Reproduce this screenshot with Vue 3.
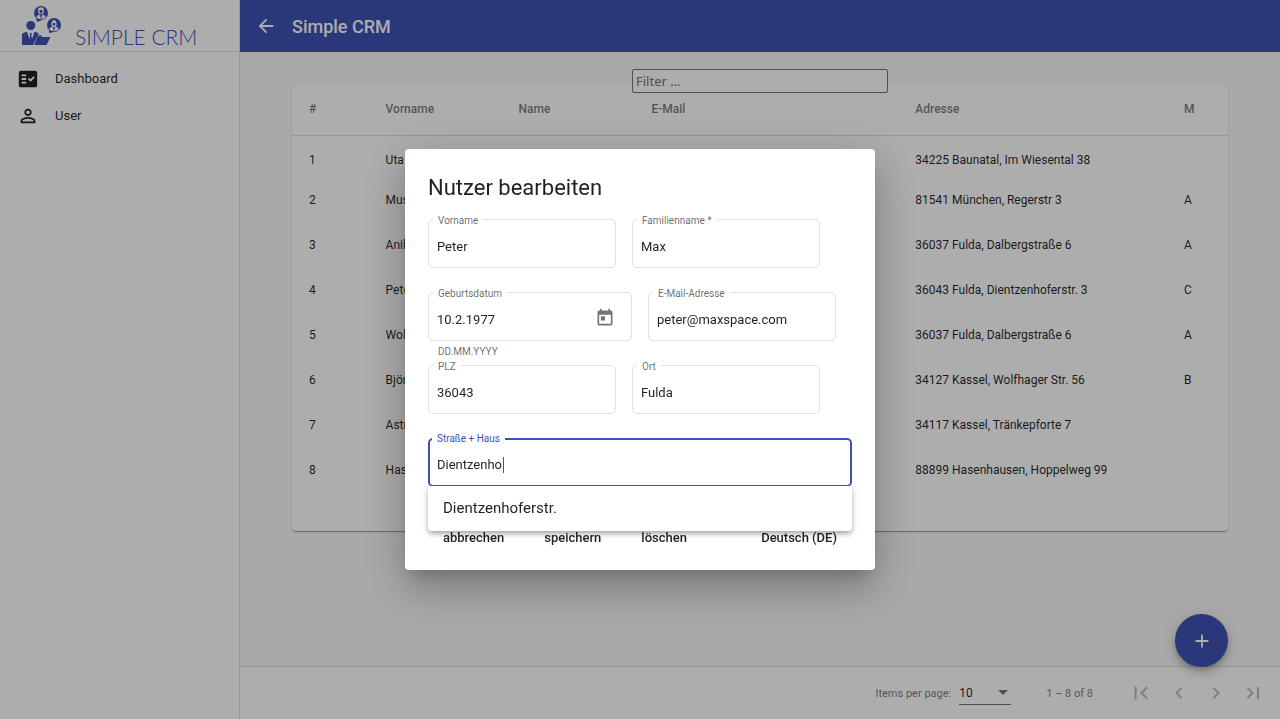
<script setup>
import { ref } from 'vue'

const filter = ref('')
const pageSize = ref('10')

const nav = [
  { label: 'Dashboard', icon: 'M20 3H4c-1.1 0-2 .9-2 2v14c0 1.1.9 2 2 2h16c1.1 0 2-.9 2-2V5c0-1.1-.9-2-2-2zM10 17H5v-2h5v2zm0-4H5v-2h5v2zm0-4H5V7h5v2zm4.82 6L12 12.16l1.41-1.41 1.41 1.42L17.99 9l1.42 1.42L14.82 15z' },
  { label: 'User', icon: 'M12 5.9c1.16 0 2.1.94 2.1 2.1s-.94 2.1-2.1 2.1S9.900 9.160 9.900 8s.94-2.100 2.100-2.100m0 9c2.970 0 6.100 1.460 6.100 2.100v1.100H5.900V17c0-.64 3.130-2.100 6.100-2.100M12 4C9.790 4 8 5.790 8 8s1.790 4 4 4 4-1.790 4-4-1.790-4-4-4zm0 9c-2.670 0-8 1.340-8 4v3h16v-3c0-2.660-5.330-4-8-4z' },
]

const users = [
  { id: 1, first: 'Uta', address: '34225 Baunatal, Im Wiesental 38', m: '' },
  { id: 2, first: 'Muster', address: '81541 München, Regerstr 3', m: 'A' },
  { id: 3, first: 'Anika', address: '36037 Fulda, Dalbergstraße 6', m: 'A' },
  { id: 4, first: 'Peter', address: '36043 Fulda, Dientzenhoferstr. 3', m: 'C' },
  { id: 5, first: 'Wolfgang', address: '36037 Fulda, Dalbergstraße 6', m: 'A' },
  { id: 6, first: 'Björn', address: '34127 Kassel, Wolfhager Str. 56', m: 'B' },
  { id: 7, first: 'Astrid', address: '34117 Kassel, Tränkepforte 7', m: '' },
  { id: 8, first: 'Hase', address: '88899 Hasenhausen, Hoppelweg 99', m: '' },
]

const pager = [
  { label: 'First page', icon: 'M18.41 16.59L13.82 12l4.590-4.590L17 6l-6 6 6 6zM6 6h2v12H6z' },
  { label: 'Previous page', icon: 'M15.41 7.410L14 6l-6 6 6 6 1.410-1.410L10.830 12z' },
  { label: 'Next page', icon: 'M10 6L8.590 7.410 13.170 12l-4.580 4.590L10 18l6-6z' },
  { label: 'Last page', icon: 'M5.590 7.410L10.180 12l-4.590 4.590L7 18l6-6-6-6zM16 6h2v12h-2z' },
]

const form = ref({
  vorname: 'Peter',
  name: 'Max',
  geburt: '10.2.1977',
  mail: 'peter@maxspace.com',
  plz: '36043',
  ort: 'Fulda',
  strasse: 'Dientzenho',
})

const rows = [
  [{ key: 'vorname', label: 'Vorname' }, { key: 'name', label: 'Familienname *' }],
  [{ key: 'geburt', label: 'Geburtsdatum', date: true, hint: 'DD.MM.YYYY' }, { key: 'mail', label: 'E-Mail-Adresse' }],
  [{ key: 'plz', label: 'PLZ' }, { key: 'ort', label: 'Ort' }],
  [{ key: 'strasse', label: 'Straße + Haus', active: true, option: 'Dientzenhoferstr.' }],
]
</script>

<template>
  <div class="app">
    <aside class="side">
      <div class="brand">
        <svg class="logo" viewBox="0 0 40 40" aria-hidden="true">
          <circle cx="19" cy="8" r="7" />
          <path d="M14 12l1 5 5-2z" />
          <circle cx="32" cy="20" r="7" />
          <path d="M27 24v4l5-1z" />
          <g class="cut">
            <path d="M16.200 4.500c0-3 5.600-3 5.600 0v2.500c0 3-5.600 3-5.600 0z" />
            <path d="M14.200 12.500c.5-2 2-2.500 3-3l1.800 2 1.800-2c1 .5 2.500 1 3 3-3 2.200-6.600 2.200-9.600 0z" />
            <path d="M29.300 19.500c0-6 5.400-6 5.400 0l-1 2.500h-3.400z" />
            <path d="M27.200 24.500c.5-2 2-2.500 3-3l1.800 2 1.800-2c1 .5 2.500 1 3 3-3 2.200-6.600 2.200-9.600 0z" />
          </g>
          <path d="M17.600 5h2.800v2c0 1.800-2.800 1.800-2.800 0zM18.400 10h1.200v3.500h-1.200zM30.800 18h2.400v2.500h-2.400zM31.400 22h1.200v3.500h-1.200z" />
          <circle cx="8.800" cy="20.500" r="4.500" />
          <path d="M0 40V30c0-2 3-2.800 5-3.200l2.600 7.200L8.200 30 7.700 28h2.200l-.5 2 .6 4 2.600-7.200c1.500.3 3.200.8 4.200 2.200L11 40z" />
          <path d="M15.500 32l1-1.500h3l.5 1.500h8.500l-4 8H12z" />
        </svg>
        <span class="wordmark">SIMPLE CRM</span>
      </div>
      <nav class="nav">
        <a v-for="n in nav" :key="n.label" href="#">
          <svg viewBox="0 0 24 24" aria-hidden="true"><path :d="n.icon" /></svg>
          <span>{{ n.label }}</span>
        </a>
      </nav>
    </aside>

    <div class="page">
      <header class="bar">
        <button type="button" aria-label="Zurück">
          <svg viewBox="0 0 24 24"><path d="M20 11H7.830l5.590-5.590L12 4l-8 8 8 8 1.410-1.410L7.830 13H20v-2z" /></svg>
        </button>
        <h1>Simple CRM</h1>
      </header>

      <main class="content">
        <input v-model="filter" class="filter" type="text" placeholder="Filter ..." aria-label="Filter">
        <div class="card">
          <table>
            <colgroup>
              <col class="c-id"><col class="c-name"><col class="c-name"><col class="c-mail"><col class="c-adr"><col>
            </colgroup>
            <thead>
              <tr><th>#</th><th>Vorname</th><th>Name</th><th>E-Mail</th><th>Adresse</th><th>M</th></tr>
            </thead>
            <tbody>
              <tr v-for="u in users" :key="u.id">
                <td>{{ u.id }}</td><td>{{ u.first }}</td><td></td><td></td><td>{{ u.address }}</td><td>{{ u.m }}</td>
              </tr>
            </tbody>
          </table>
        </div>
        <button class="fab" type="button" aria-label="Hinzufügen">
          <svg viewBox="0 0 24 24"><path d="M19 13h-6v6h-2v-6H5v-2h6V5h2v6h6v2z" /></svg>
        </button>
      </main>

      <footer class="pager">
        <label for="size">Items per page:</label>
        <div class="size">
          <select id="size" v-model="pageSize">
            <option>10</option>
            <option>25</option>
          </select>
          <i class="caret"></i>
        </div>
        <span class="range">1 – 8 of 8</span>
        <button v-for="p in pager" :key="p.label" type="button" :aria-label="p.label" disabled>
          <svg viewBox="0 0 24 24"><path :d="p.icon" /></svg>
        </button>
      </footer>
    </div>

    <div class="backdrop">
      <form class="dialog" role="dialog" aria-labelledby="dlg-title" @submit.prevent>
        <h2 id="dlg-title">Nutzer bearbeiten</h2>
        <div v-for="(r, i) in rows" :key="i" class="row">
          <div v-for="f in r" :key="f.key" class="field" :class="{ date: f.date, active: f.active }">
            <label :for="f.key">{{ f.label }}</label>
            <input :id="f.key" v-model="form[f.key]" type="text">
            <button v-if="f.date" class="cal" type="button" aria-label="Kalender öffnen">
              <svg viewBox="0 0 24 24"><path d="M19 3h-1V1h-2v2H8V1H6v2H5c-1.110 0-1.990.9-1.990 2L3 19c0 1.100.89 2 2 2h14c1.100 0 2-.9 2-2V5c0-1.100-.9-2-2-2zm0 16H5V8h14v11zM7 10h5v5H7z" /></svg>
            </button>
            <span v-if="f.hint" class="hint">{{ f.hint }}</span>
            <i v-if="f.active" class="cursor"></i>
            <div v-if="f.option" class="menu" role="listbox">
              <div class="option" role="option">{{ f.option }}</div>
            </div>
          </div>
        </div>
        <div class="actions">
          <button type="button">abbrechen</button>
          <button type="submit">speichern</button>
          <button type="button">löschen</button>
          <button type="button" class="lang">Deutsch (DE)</button>
        </div>
      </form>
    </div>
  </div>
</template>

<style>
body {
  background: #fafafa;
}
</style>

<style scoped>
.app, .app * {
  box-sizing: border-box;
}
.app {
  display: flex;
  min-height: 100vh;
  font-family: Roboto, "Liberation Sans", sans-serif;
  font-size: 13px;
  color: rgba(0, 0, 0, .87);
}
button {
  padding: 0;
  border: 0;
  background: none;
  font: inherit;
  color: inherit;
}
svg {
  display: block;
  width: 22px;
  height: 22px;
  fill: currentColor;
}
.side {
  flex: 0 0 240px;
  background: #fff;
  border-right: 1px solid #e0e0e0;
}
.brand {
  display: flex;
  align-items: flex-end;
  gap: 13px;
  height: 52px;
  padding: 0 22px 6px;
  border-bottom: 1px solid #e0e0e0;
  color: #3f51b5;
}
.logo {
  width: 40px;
  height: 40px;
}
.cut {
  fill: #fff;
}
.wordmark {
  font-family: Lato, "Open Sans", sans-serif;
  font-weight: 300;
  font-size: 21px;
  line-height: 16px;
  white-space: nowrap;
}
.nav {
  padding-top: 8px;
}
.nav a {
  display: flex;
  align-items: center;
  gap: 16px;
  height: 37px;
  padding-left: 17px;
  color: inherit;
  text-decoration: none;
}
.page {
  flex: 1;
  display: flex;
  flex-direction: column;
  min-width: 0;
}
.bar {
  display: flex;
  align-items: center;
  gap: 15px;
  height: 52px;
  padding-left: 15px;
  background: #3f51b5;
  color: #fff;
}
h1 {
  margin: 0;
  font-size: 18px;
  font-weight: 500;
}
.content {
  flex: 1;
  display: flex;
  flex-direction: column;
  align-items: center;
  padding: 17px 52px 0;
}
.filter {
  position: relative;
  z-index: 1;
  width: 256px;
  height: 24px;
  padding: 0 3px;
  border: 1px solid #767676;
  border-radius: 2px;
  background: #fff;
  font: 13px "Noto Sans", sans-serif;
}
.card {
  width: 100%;
  margin-top: -10px;
  padding-bottom: 39px;
  background: #fff;
  border-radius: 4px;
  box-shadow: 0 2px 1px -1px rgba(0, 0, 0, .2), 0 1px 1px rgba(0, 0, 0, .14), 0 1px 3px rgba(0, 0, 0, .12);
}
table {
  width: 100%;
  table-layout: fixed;
  border-collapse: collapse;
  font-size: 12px;
}
.c-id { width: 10%; }
.c-name { width: 14.2%; }
.c-mail { width: 28.2%; }
.c-adr { width: 28.7%; }
th, td {
  padding: 0;
  text-align: left;
  white-space: nowrap;
}
th:first-child, td:first-child {
  padding-left: 17px;
}
th {
  height: 52px;
  font-weight: 500;
  color: rgba(0, 0, 0, .54);
  border-bottom: 1px solid #e0e0e0;
}
td {
  height: 45px;
}
tbody tr:first-child td {
  height: 42px;
  padding-top: 8px;
}
.fab {
  display: grid;
  place-items: center;
  align-self: flex-end;
  width: 53px;
  height: 53px;
  margin-top: auto;
  margin-bottom: -1px;
  border-radius: 50%;
  background: #3f51b5;
  color: #fff;
  z-index: 1;
  box-shadow: 0 3px 5px -1px rgba(0, 0, 0, .2), 0 6px 10px rgba(0, 0, 0, .14), 0 1px 18px rgba(0, 0, 0, .12);
}
.pager {
  display: flex;
  align-items: center;
  justify-content: flex-end;
  height: 53px;
  padding-right: 15px;
  background: #fff;
  border-top: 1px solid #e0e0e0;
  font-size: 11px;
  color: rgba(0, 0, 0, .54);
}
.size {
  position: relative;
  width: 52px;
  margin: 0 35px 0 8px;
}
.size select {
  width: 100%;
  height: 24px;
  padding: 0;
  border: 0;
  border-bottom: 1px solid rgba(0, 0, 0, .54);
  border-radius: 0;
  background: none;
  appearance: none;
  font: inherit;
  font-size: 12px;
  color: rgba(0, 0, 0, .87);
}
.caret {
  position: absolute;
  right: 3px;
  top: 9px;
  border: 5px solid transparent;
  border-top-color: rgba(0, 0, 0, .54);
  border-bottom: 0;
}
.range {
  margin-right: 35px;
}
.pager button {
  color: rgba(0, 0, 0, .26);
}
.pager button + button {
  margin-left: 13px;
}
.pager svg {
  width: 26px;
  height: 26px;
}
.pager button + button svg {
  width: 24px;
}
.backdrop {
  position: fixed;
  inset: 0;
  z-index: 5;
  display: flex;
  align-items: center;
  justify-content: center;
  background: rgba(0, 0, 0, .32);
}
.dialog {
  width: 470px;
  padding: 23px 23px 15px;
  background: #fff;
  border-radius: 4px;
  box-shadow: 0 11px 15px -7px rgba(0, 0, 0, .2), 0 24px 38px 3px rgba(0, 0, 0, .14), 0 9px 46px 8px rgba(0, 0, 0, .12);
}
h2 {
  margin: 0 0 16px;
  font-size: 22px;
  line-height: 31px;
  font-weight: 400;
}
.row {
  display: flex;
  gap: 16px;
  margin-bottom: 24px;
}
.field {
  position: relative;
  display: flex;
  align-items: center;
  width: 188px;
  height: 49px;
  padding: 5px 9px 0 8px;
  border: 1px solid #e0e0e0;
  border-radius: 5px;
}
.field.date {
  width: 204px;
}
.field label, .hint {
  position: absolute;
  left: 4px;
  top: -6px;
  padding: 0 5px;
  background: #fff;
  font-size: 10px;
  line-height: 14px;
  color: rgba(0, 0, 0, .6);
  white-space: nowrap;
}
.field .hint {
  top: 52px;
}
.field input {
  flex: 1;
  min-width: 0;
  padding: 0;
  border: 0;
  outline: 0;
  background: none;
  font: inherit;
  color: inherit;
}
.cal {
  margin: 0 7px 3px 0;
  color: rgba(0, 0, 0, .54);
}
.cal svg {
  width: 20px;
  height: 20px;
}
.field.active {
  width: 424px;
  padding-top: 4px;
  padding-left: 7px;
  border: 2px solid #3f51b5;
}
.field.active label {
  left: 2px;
  top: -8px;
  color: #3f51b5;
}
.cursor {
  position: absolute;
  left: 73px;
  top: 17px;
  width: 1px;
  height: 16px;
  background: #3f51b5;
}
.menu {
  position: absolute;
  z-index: 2;
  top: 46px;
  left: -2px;
  right: -2px;
  background: #fff;
  border-radius: 0 0 4px 4px;
  box-shadow: 0 2px 4px -1px rgba(0, 0, 0, .2), 0 4px 5px rgba(0, 0, 0, .14), 0 1px 10px rgba(0, 0, 0, .12);
  clip-path: inset(0 -12px -16px -12px);
}
.option {
  padding: 0 15px;
  font-size: 15px;
  line-height: 45px;
}
.actions {
  display: flex;
  align-items: center;
  gap: 40px;
  margin-top: 34px;
  padding: 0 15px;
  font-weight: 500;
  line-height: 34px;
}
.lang {
  margin-left: auto;
}
</style>
